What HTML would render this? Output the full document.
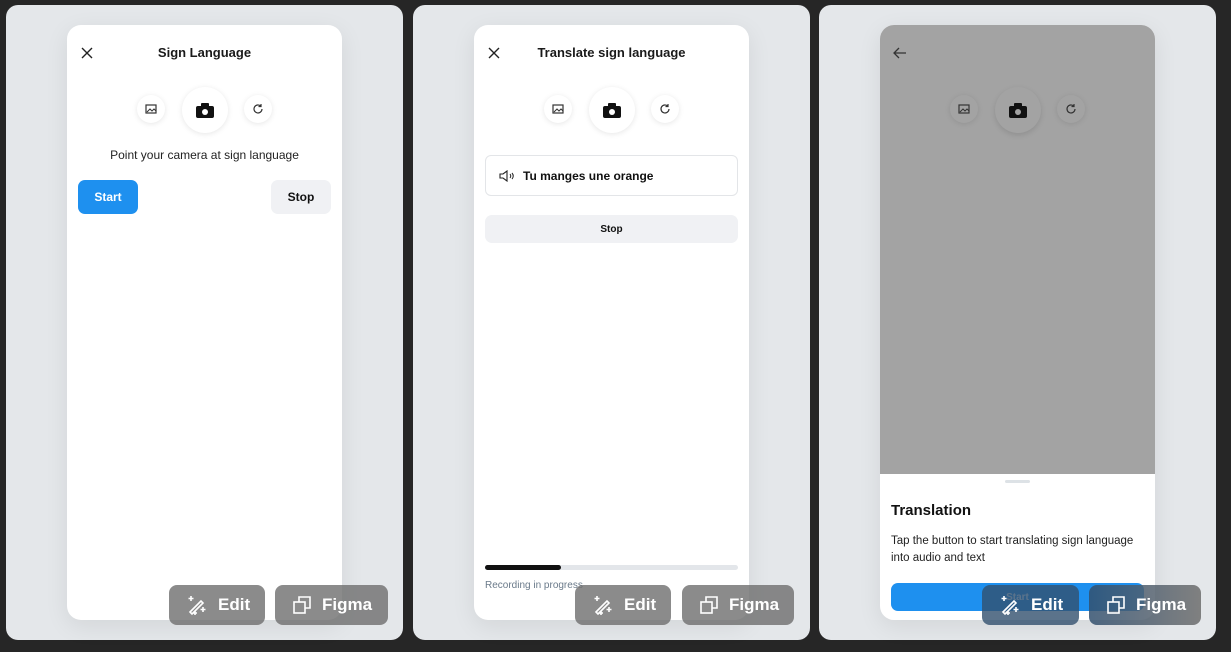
<!DOCTYPE html>
<html><head><style>
*{box-sizing:border-box;margin:0;padding:0}
body{width:1231px;height:652px;background:#262626;font-family:"Liberation Sans",sans-serif;position:relative;overflow:hidden;color:#111}
.panel{position:absolute;top:5px;width:397px;height:635px;background:#e4e7ea;border-radius:12px}
.phone{position:absolute;top:25px;width:275px;height:595px;background:#fff;border-radius:14px;overflow:hidden;box-shadow:0 6px 24px rgba(0,0,0,.08)}
.abs{position:absolute}
.title{position:absolute;top:20px;left:0;right:0;text-align:center;font-weight:bold;font-size:13px;color:#1a1a1a}
.ic{position:absolute;border-radius:50%;background:#fff;box-shadow:0 1px 6px rgba(0,0,0,.1);display:flex;align-items:center;justify-content:center}
.btn{position:absolute;top:585px;height:40px;border-radius:8px;background:rgba(110,110,110,.8);color:#fff;font-weight:bold;font-size:17px;display:flex;align-items:center;gap:10px;padding-left:17px}
</style></head><body>
<div class="panel" style="left:6px"></div>
<div class="panel" style="left:413px"></div>
<div class="panel" style="left:819px"></div>

<!-- phone 1 -->
<div class="phone" style="left:67px">
 <svg class="abs" style="left:14px;top:22px" width="12" height="12" viewBox="0 0 12 12"><path d="M1 1L11 11M11 1L1 11" stroke="#222" stroke-width="1.4"/></svg>
 <div class="title">Sign Language</div>
 <div class="ic" style="left:70px;top:70px;width:28px;height:28px"><svg width="12" height="10"><rect x="1" y="1" width="10" height="8" fill="none" stroke="#333" stroke-width="1.2"/><path d="M2 8l3-3 2 2 2-2 2 2" stroke="#333" fill="none"/></svg></div>
 <div class="ic" style="left:115px;top:62px;width:46px;height:46px"><svg width="18" height="15"><rect x="0" y="3" width="18" height="12" rx="2" fill="#111"/><rect x="5" y="0" width="8" height="4" rx="1" fill="#111"/><circle cx="9" cy="9" r="3" fill="#fff"/></svg></div>
 <div class="ic" style="left:177px;top:70px;width:28px;height:28px"><svg width="12" height="12" viewBox="0 0 12 12"><path d="M10 6a4 4 0 1 1-1.2-2.9M9 1v2.5H6.5" stroke="#333" fill="none" stroke-width="1.2"/></svg></div>
 <div class="abs" style="top:123px;left:0;right:0;text-align:center;font-size:12px;color:#222">Point your camera at sign language</div>
 <div class="abs" style="left:11px;top:155px;width:60px;height:34px;border-radius:7px;background:#1e90ef;color:#fff;font-weight:bold;font-size:12px;display:flex;align-items:center;justify-content:center">Start</div>
 <div class="abs" style="left:204px;top:155px;width:60px;height:34px;border-radius:7px;background:#f0f1f4;font-weight:bold;font-size:12px;display:flex;align-items:center;justify-content:center">Stop</div>
</div>

<!-- phone 2 -->
<div class="phone" style="left:474px">
 <svg class="abs" style="left:14px;top:22px" width="12" height="12" viewBox="0 0 12 12"><path d="M1 1L11 11M11 1L1 11" stroke="#222" stroke-width="1.4"/></svg>
 <div class="title">Translate sign language</div>
 <div class="ic" style="left:70px;top:70px;width:28px;height:28px"><svg width="12" height="10"><rect x="1" y="1" width="10" height="8" fill="none" stroke="#333" stroke-width="1.2"/><path d="M2 8l3-3 2 2 2-2 2 2" stroke="#333" fill="none"/></svg></div>
 <div class="ic" style="left:115px;top:62px;width:46px;height:46px"><svg width="18" height="15"><rect x="0" y="3" width="18" height="12" rx="2" fill="#111"/><rect x="5" y="0" width="8" height="4" rx="1" fill="#111"/><circle cx="9" cy="9" r="3" fill="#fff"/></svg></div>
 <div class="ic" style="left:177px;top:70px;width:28px;height:28px"><svg width="12" height="12" viewBox="0 0 12 12"><path d="M10 6a4 4 0 1 1-1.2-2.9M9 1v2.5H6.5" stroke="#333" fill="none" stroke-width="1.2"/></svg></div>
 <div class="abs" style="left:11px;top:130px;width:253px;height:41px;border:1px solid #e3e5e8;border-radius:6px;display:flex;align-items:center;padding-left:13px;gap:8px;font-weight:bold;font-size:12px"><svg width="16" height="12" viewBox="0 0 16 12"><path d="M1 4h3l4-3v10L4 8H1z" fill="none" stroke="#222" stroke-width="1.1"/><path d="M11 4q1.5 2 0 4M13 3q2.5 3 0 6" stroke="#222" fill="none"/></svg>Tu manges une orange</div>
 <div class="abs" style="left:11px;top:190px;width:253px;height:28px;border-radius:7px;background:#f0f1f4;font-weight:bold;font-size:10px;display:flex;align-items:center;justify-content:center">Stop</div>
 <div class="abs" style="left:11px;top:540px;width:253px;height:5px;border-radius:3px;background:#e3e6ea"><div style="width:76px;height:5px;border-radius:3px;background:#111"></div></div>
 <div class="abs" style="left:11px;top:555px;font-size:10px;color:#6a7a8a">Recording in progress</div>
</div>

<!-- phone 3 -->
<div class="phone" style="left:880px">
 <div class="abs" style="left:0;top:0;width:275px;height:449px;background:#a3a3a3"></div>
 <svg class="abs" style="left:13px;top:22px" width="14" height="12" viewBox="0 0 14 12"><path d="M13 6H1M6 1L1 6l5 5" stroke="#333" fill="none" stroke-width="1.3"/></svg>
 <div class="ic" style="left:70px;top:70px;width:28px;height:28px;background:#a3a3a3;box-shadow:0 1px 6px rgba(0,0,0,.1)"><svg width="12" height="10"><rect x="1" y="1" width="10" height="8" fill="none" stroke="#333" stroke-width="1.2"/><path d="M2 8l3-3 2 2 2-2 2 2" stroke="#333" fill="none"/></svg></div>
 <div class="ic" style="left:115px;top:62px;width:46px;height:46px;background:#a3a3a3;box-shadow:0 2px 6px rgba(0,0,0,.12)"><svg width="18" height="15"><rect x="0" y="3" width="18" height="12" rx="2" fill="#111"/><rect x="5" y="0" width="8" height="4" rx="1" fill="#111"/><circle cx="9" cy="9" r="3" fill="#a3a3a3"/></svg></div>
 <div class="ic" style="left:177px;top:70px;width:28px;height:28px;background:#a3a3a3;box-shadow:0 1px 6px rgba(0,0,0,.1)"><svg width="12" height="12" viewBox="0 0 12 12"><path d="M10 6a4 4 0 1 1-1.2-2.9M9 1v2.5H6.5" stroke="#333" fill="none" stroke-width="1.2"/></svg></div>
 <div class="abs" style="left:125px;top:455px;width:25px;height:3px;border-radius:2px;background:#dde2e6"></div>
 <div class="abs" style="left:11px;top:477px;font-weight:bold;font-size:15px">Translation</div>
 <div class="abs" style="left:11px;top:508px;width:256px;font-size:11.5px;line-height:17px;color:#222">Tap the button to start translating sign language<br>into audio and text</div>
 <div class="abs" style="left:11px;top:558px;width:253px;height:28px;border-radius:7px;background:#1e90ef;color:#fff;font-size:10px;font-weight:bold;display:flex;align-items:center;justify-content:center">Start</div>
</div>

<!-- overlay buttons -->
<div class="btn" style="left:169px;width:96px"><svg width="22" height="22" viewBox="0 0 22 22" fill="none" stroke="#fff" stroke-width="1.6"><path d="M4 18L15 7l2 2L6 20z"/><path d="M5 2v5M2.5 4.5h5M17 13v5M14.5 15.5h5M9 17v4M7 19h4"/></svg>Edit</div>
<div class="btn" style="left:275px;width:113px"><svg width="20" height="20" viewBox="0 0 20 20" fill="none" stroke="#fff" stroke-width="1.6"><rect x="2" y="7" width="11" height="11"/><path d="M7 7V2h11v11h-5"/></svg>Figma</div>
<div class="btn" style="left:575px;width:96px"><svg width="22" height="22" viewBox="0 0 22 22" fill="none" stroke="#fff" stroke-width="1.6"><path d="M4 18L15 7l2 2L6 20z"/><path d="M5 2v5M2.5 4.5h5M17 13v5M14.5 15.5h5M9 17v4M7 19h4"/></svg>Edit</div>
<div class="btn" style="left:682px;width:112px"><svg width="20" height="20" viewBox="0 0 20 20" fill="none" stroke="#fff" stroke-width="1.6"><rect x="2" y="7" width="11" height="11"/><path d="M7 7V2h11v11h-5"/></svg>Figma</div>
<div class="btn" style="left:982px;width:97px;background:rgba(50,80,110,.8)"><svg width="22" height="22" viewBox="0 0 22 22" fill="none" stroke="#fff" stroke-width="1.6"><path d="M4 18L15 7l2 2L6 20z"/><path d="M5 2v5M2.5 4.5h5M17 13v5M14.5 15.5h5M9 17v4M7 19h4"/></svg>Edit</div>
<div class="btn" style="left:1089px;width:112px;background:linear-gradient(90deg,rgba(50,80,110,.85),rgba(110,110,110,.85))"><svg width="20" height="20" viewBox="0 0 20 20" fill="none" stroke="#fff" stroke-width="1.6"><rect x="2" y="7" width="11" height="11"/><path d="M7 7V2h11v11h-5"/></svg>Figma</div>
</body></html>
